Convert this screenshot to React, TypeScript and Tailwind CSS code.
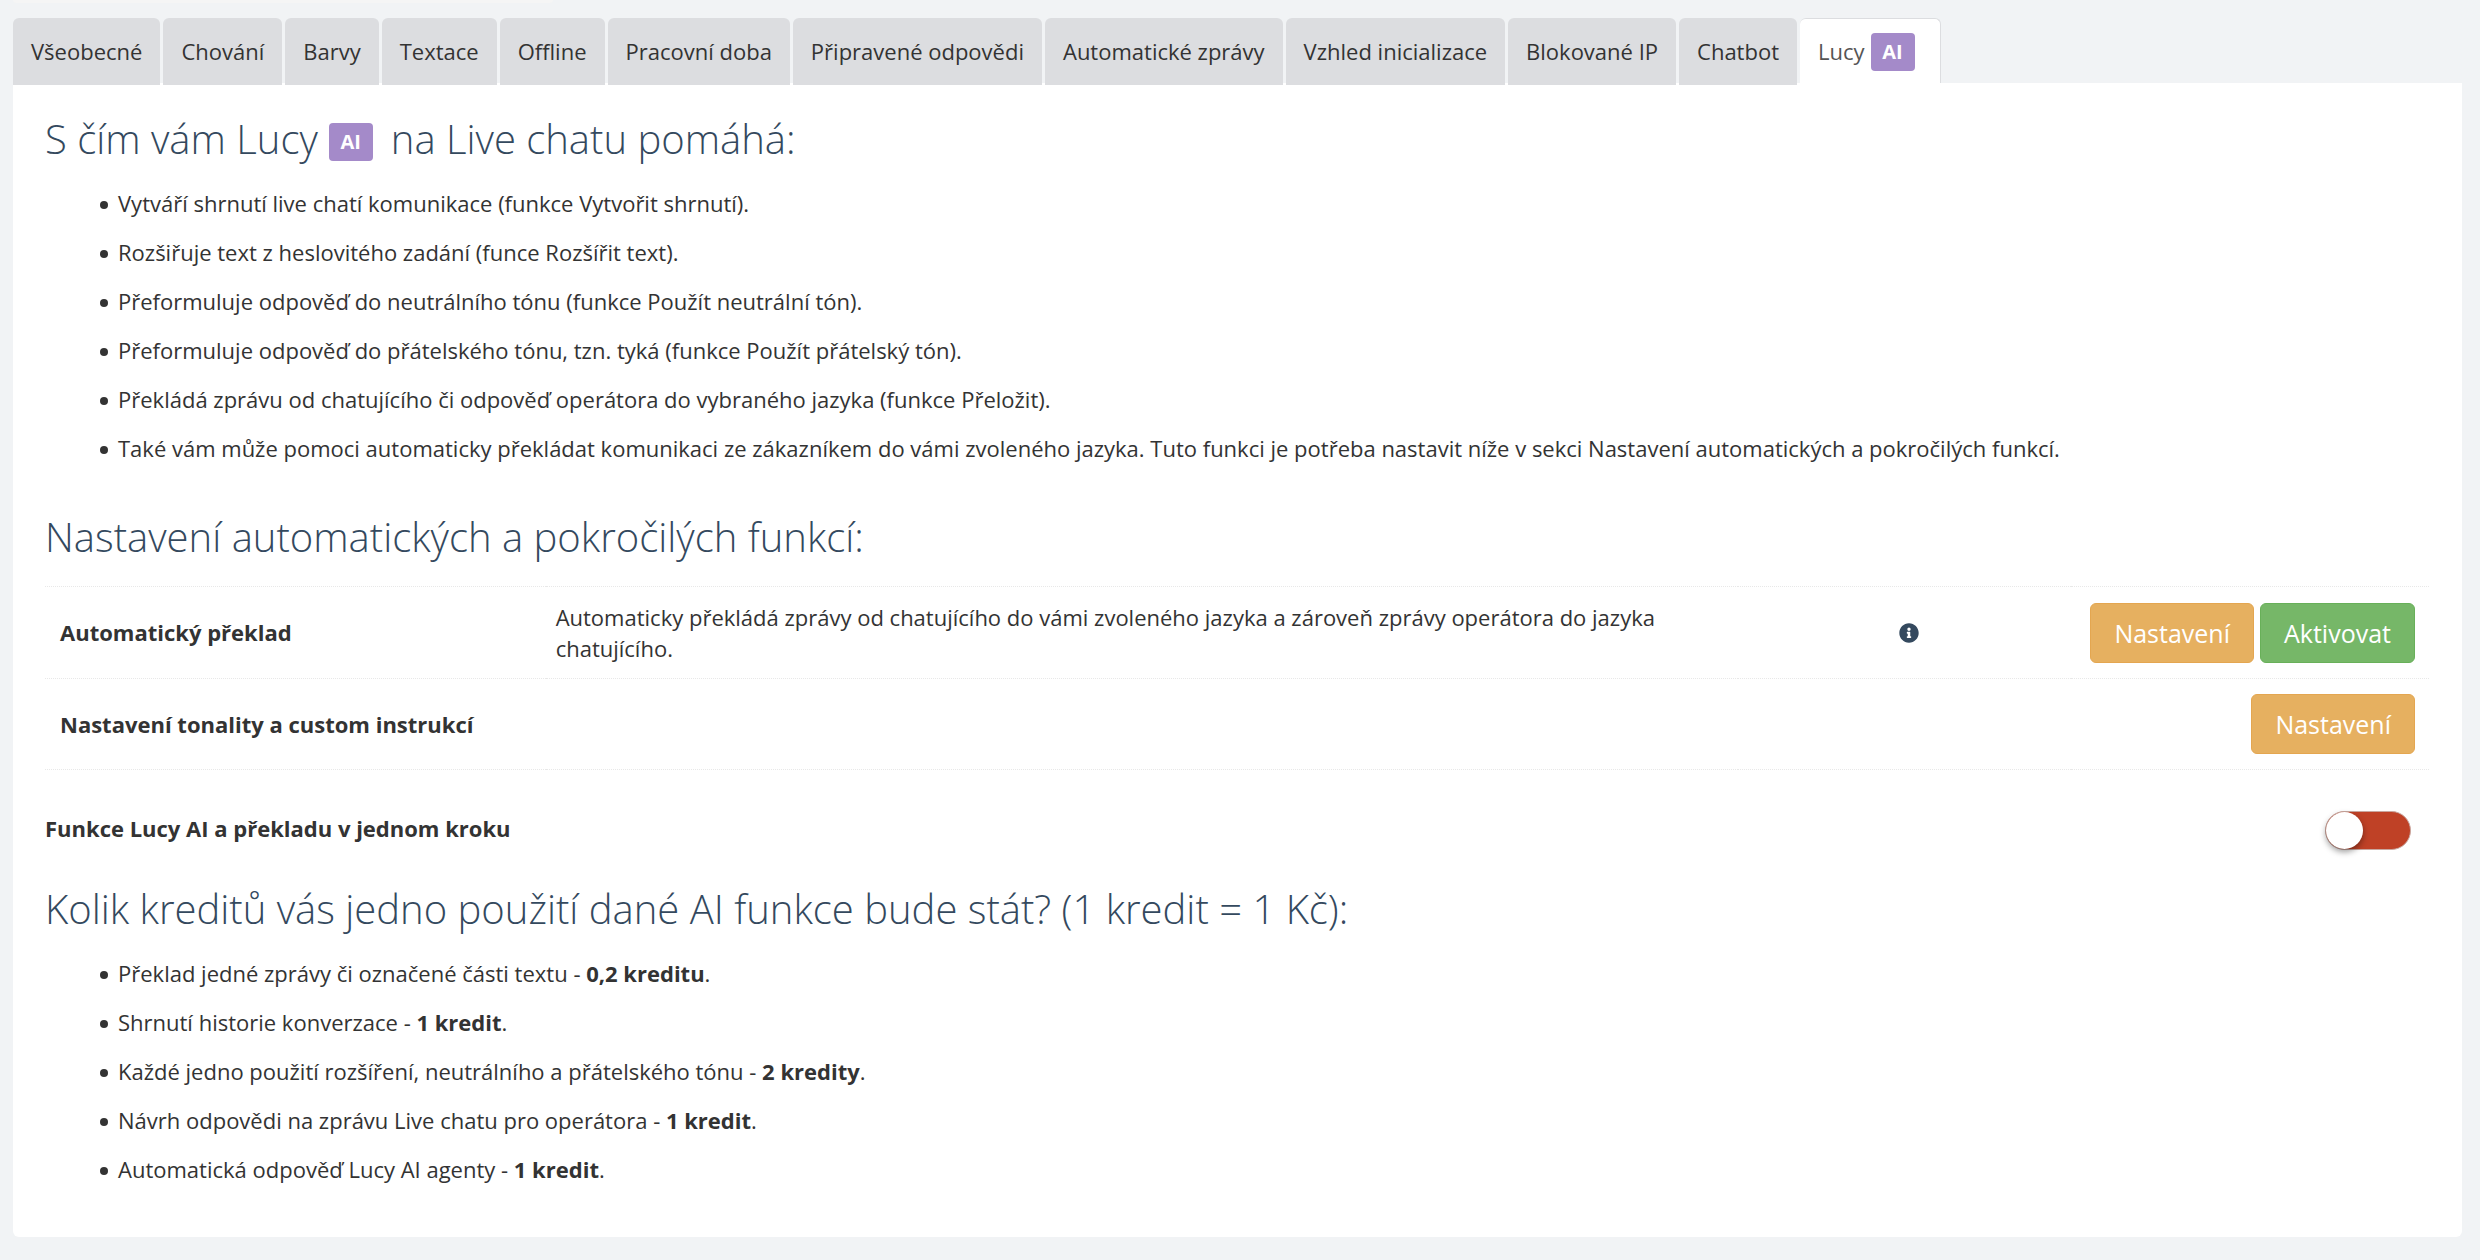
import { useState } from 'react';
import { FaInfoCircle } from 'react-icons/fa';

const tabs = [
  'Všeobecné',
  'Chování',
  'Barvy',
  'Textace',
  'Offline',
  'Pracovní doba',
  'Připravené odpovědi',
  'Automatické zprávy',
  'Vzhled inicializace',
  'Blokované IP',
  'Chatbot',
  'Lucy',
];

const helps = [
  'Vytváří shrnutí live chatí komunikace (funkce Vytvořit shrnutí).',
  'Rozšiřuje text z heslovitého zadání (funce Rozšířit text).',
  'Přeformuluje odpověď do neutrálního tónu (funkce Použít neutrální tón).',
  'Přeformuluje odpověď do přátelského tónu, tzn. tyká (funkce Použít přátelský tón).',
  'Překládá zprávu od chatujícího či odpověď operátora do vybraného jazyka (funkce Přeložit).',
  'Také vám může pomoci automaticky překládat komunikaci ze zákazníkem do vámi zvoleného jazyka. Tuto funkci je potřeba nastavit níže v sekci Nastavení automatických a pokročilých funkcí.',
];

const prices = [
  { label: 'Překlad jedné zprávy či označené části textu', price: '0,2 kreditu' },
  { label: 'Shrnutí historie konverzace', price: '1 kredit' },
  { label: 'Každé jedno použití rozšíření, neutrálního a přátelského tónu', price: '2 kredity' },
  { label: 'Návrh odpovědi na zprávu Live chatu pro operátora', price: '1 kredit' },
  { label: 'Automatická odpověď Lucy AI agenty', price: '1 kredit' },
];

const heading = 'text-[40px] leading-[44px] font-light text-[#34495e]';
const list = 'mt-[26px] flex flex-col gap-[17px] pl-[55px] leading-8';
const item =
  'before:mr-[10px] before:inline-block before:size-2 before:rounded-full before:bg-[#333] before:align-[3px]';
const btn = 'h-[60px] rounded-md border px-[23px] text-[25px] leading-9 text-white';
const warning = 'border-[#e4a650] bg-[#e6b060]';
const success = 'border-[#68b059] bg-[#76b768]';

function AiBadge() {
  return (
    <span className="inline-flex h-[38px] w-11 items-center justify-center rounded bg-[#a48ac9] text-[20px] font-bold text-white">
      AI
    </span>
  );
}

export default function App() {
  const [active, setActive] = useState('Lucy');
  const [oneStep, setOneStep] = useState(false);

  return (
    <div className="min-h-screen bg-[#f1f3f5] pr-[18px] pb-[22px] pl-[13px] font-['Open_Sans','Noto_Sans',sans-serif] text-[22px] text-[#333]">
      <div className="h-[3px] w-[540px] rounded-b-md bg-[#f5f5f5]" />

      <nav className="mt-[15px] flex h-[65px] gap-[3px] whitespace-nowrap">
        {tabs.map((t) => (
          <button
            key={t}
            onClick={() => setActive(t)}
            className={`flex items-center rounded-t-md ${
              active === t
                ? 'h-[65px] border-t border-r border-[#dcdde0] bg-white pr-[25px] pl-[18px] text-[#555]'
                : 'h-[67px] bg-[#dcdde0] px-[18px]'
            }`}
          >
            {t}
            {t === 'Lucy' && <span className="mt-[2px] ml-[6px] flex"><AiBadge /></span>}
          </button>
        ))}
      </nav>

      <main className="rounded-b-md bg-white px-8 pt-[34px] pb-[52px]">
        <h2 className={`${heading} flex items-center`}>
          S čím vám Lucy
          <span className="mt-[6px] mr-[18px] ml-[11px] flex"><AiBadge /></span>
          na Live chatu pomáhá:
        </h2>
        <ul className={list}>
          {helps.map((h) => <li key={h} className={item}>{h}</li>)}
        </ul>

        <h2 className={`${heading} mt-[51px]`}>Nastavení automatických a pokročilých funkcí:</h2>
        <table className="mt-[27px] w-[calc(100%-1px)] table-fixed text-left">
          <colgroup>
            <col className="w-[21%]" />
            <col className="w-[50%]" />
            <col className="w-[14%]" />
            <col className="w-[15%]" />
          </colgroup>
          <tbody>
            <tr className="h-[92px] border-y border-dotted border-[#e8e8e8]">
              <th className="px-[15px] font-bold">Automatický překlad</th>
              <td className="px-[10px] leading-[31px]">
                Automaticky překládá zprávy od chatujícího do vámi zvoleného jazyka a zároveň zprávy operátora do jazyka chatujícího.
              </td>
              <td className="pl-2">
                <FaInfoCircle className="mx-auto size-5 text-[#34495e]" />
              </td>
              <td className="pr-[14px]">
                <div className="flex justify-end gap-[6px]">
                  <button className={`${btn} ${warning}`}>Nastavení</button>
                  <button className={`${btn} ${success}`}>Aktivovat</button>
                </div>
              </td>
            </tr>
            <tr className="h-[91px] border-b border-dotted border-[#e8e8e8]">
              <th colSpan={3} className="px-[15px] font-bold">Nastavení tonality a custom instrukcí</th>
              <td className="pr-[14px]">
                <div className="flex justify-end">
                  <button className={`${btn} ${warning}`}>Nastavení</button>
                </div>
              </td>
            </tr>
          </tbody>
        </table>

        <div className="mt-[41px] flex items-center justify-between pr-[19px]">
          <label htmlFor="one-step" className="pb-1 font-bold">Funkce Lucy AI a překladu v jednom kroku</label>
          <input
            id="one-step"
            type="checkbox"
            role="switch"
            checked={oneStep}
            onChange={(e) => setOneStep(e.target.checked)}
            className="flex h-[39px] w-[86px] appearance-none rounded-full border border-[#c9a79f] bg-[#bf4126] before:size-[37px] before:rounded-full before:bg-white before:shadow-[0_3px_6px_rgba(0,0,0,0.4)] checked:justify-end checked:bg-[#76b768]"
          />
        </div>

        <h2 className={`${heading} mt-[37px]`}>Kolik kreditů vás jedno použití dané AI funkce bude stát? (1 kredit = 1 Kč):</h2>
        <ul className={list}>
          {prices.map((p) => (
            <li key={p.label} className={item}>
              {p.label} - <b>{p.price}</b>.
            </li>
          ))}
        </ul>
      </main>
    </div>
  );
}
